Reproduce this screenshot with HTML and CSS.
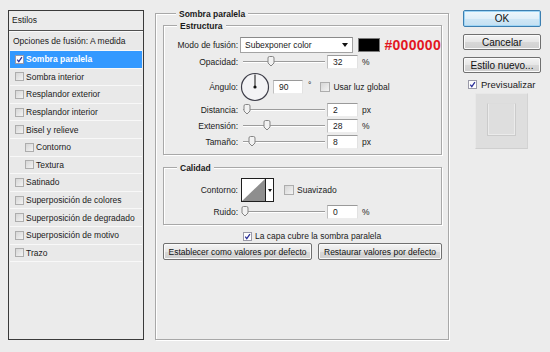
FILE: index.html
```html
<!DOCTYPE html>
<html lang="es">
<head>
    <meta charset="UTF-8">
    <meta name="viewport" content="width=device-width, initial-scale=1.0">
    <title>Estilo de capa</title>
    <link rel="stylesheet" href="styles.css">
</head>
<body>
    <div class="dialog">
        <!-- lista de estilos -->
        <div class="styles-list">
            <div class="list-header">Estilos</div>
            <div class="list-row plain">Opciones de fusión: A medida</div>
            <div class="list-row selected">
                <span class="check checked"><svg width="9" height="9" viewBox="0 0 9 9"><path d="M1.6 4.6 L3.6 7.2 L7.6 1.4" fill="none" stroke="#2a2f9a" stroke-width="1.6"/></svg></span>Sombra paralela
            </div>
            <div class="list-row"><span class="check"></span>Sombra interior</div>
            <div class="list-row"><span class="check"></span>Resplandor exterior</div>
            <div class="list-row"><span class="check"></span>Resplandor interior</div>
            <div class="list-row"><span class="check"></span>Bisel y relieve</div>
            <div class="list-row sub"><span class="check"></span>Contorno</div>
            <div class="list-row sub"><span class="check"></span>Textura</div>
            <div class="list-row"><span class="check"></span>Satinado</div>
            <div class="list-row"><span class="check"></span>Superposición de colores</div>
            <div class="list-row"><span class="check"></span>Superposición de degradado</div>
            <div class="list-row"><span class="check"></span>Superposición de motivo</div>
            <div class="list-row"><span class="check"></span>Trazo</div>
        </div>

        <!-- panel central -->
        <div class="panel">
            <div class="group outer">
                <div class="group-title">Sombra paralela</div>

                <div class="group inner estructura">
                    <div class="group-title">Estructura</div>

                    <div class="field-row row-mode">
                        <span class="field-label">Modo de fusión:</span>
                        <div class="select">Subexponer color<span class="arrow"></span></div>
                        <div class="swatch"></div>
                        <span class="hex">#000000</span>
                    </div>

                    <div class="field-row row-slider first">
                        <span class="field-label">Opacidad:</span>
                        <div class="slider"><span class="thumb" style="left: 30%"></span></div>
                        <div class="num-input">32</div>
                        <span class="unit">%</span>
                    </div>

                    <div class="field-row row-angle">
                        <span class="field-label">Ángulo:</span>
                        <svg class="dial" width="30" height="30" viewBox="0 0 30 30">
                            <circle cx="15" cy="15" r="13.5" fill="#f3f3f5" stroke="#3d3d48" stroke-width="1.2"/>
                            <line x1="15" y1="15" x2="15" y2="2.5" stroke="#222" stroke-width="1.1"/>
                            <circle cx="15" cy="15" r="1.6" fill="#111"/>
                        </svg>
                        <div class="num-input angle">90</div>
                        <span class="degree">°</span>
                        <span class="check box-check"></span>
                        <span class="check-text">Usar luz global</span>
                    </div>

                    <div class="field-row row-slider">
                        <span class="field-label">Distancia:</span>
                        <div class="slider"><span class="thumb" style="left: 2%"></span></div>
                        <div class="num-input">2</div>
                        <span class="unit">px</span>
                    </div>

                    <div class="field-row row-slider">
                        <span class="field-label">Extensión:</span>
                        <div class="slider"><span class="thumb" style="left: 26%"></span></div>
                        <div class="num-input">28</div>
                        <span class="unit">%</span>
                    </div>

                    <div class="field-row row-slider">
                        <span class="field-label">Tamaño:</span>
                        <div class="slider"><span class="thumb" style="left: 8%"></span></div>
                        <div class="num-input">8</div>
                        <span class="unit">px</span>
                    </div>
                </div>

                <div class="group inner calidad">
                    <div class="group-title">Calidad</div>

                    <div class="field-row row-contour">
                        <span class="field-label">Contorno:</span>
                        <div class="contour">
                            <svg width="23" height="22" viewBox="0 0 23 22">
                                <polygon points="0,0 23,0 0,22" fill="#fff"/>
                                <polygon points="23,0 23,22 0,22" fill="#8e8e8e"/>
                            </svg>
                            <span class="contour-arrow"><span class="arrow"></span></span>
                        </div>
                        <span class="check box-check soft"></span>
                        <span class="check-text">Suavizado</span>
                    </div>

                    <div class="field-row row-slider">
                        <span class="field-label">Ruido:</span>
                        <div class="slider"><span class="thumb" style="left: 0%"></span></div>
                        <div class="num-input">0</div>
                        <span class="unit">%</span>
                    </div>
                </div>

                <div class="knock-row">
                    <span class="check checked"><svg width="9" height="9" viewBox="0 0 9 9"><path d="M1.6 4.6 L3.6 7.2 L7.6 1.4" fill="none" stroke="#2a2f9a" stroke-width="1.6"/></svg></span>
                    <span class="check-text">La capa cubre la sombra paralela</span>
                </div>

                <div class="default-buttons">
                    <button class="btn wide">Establecer como valores por defecto</button>
                    <button class="btn">Restaurar valores por defecto</button>
                </div>
            </div>
        </div>

        <!-- botones de la derecha -->
        <div class="actions">
            <button class="btn big primary">OK</button>
            <button class="btn big">Cancelar</button>
            <button class="btn big">Estilo nuevo...</button>
            <div class="preview-toggle">
                <span class="check checked"><svg width="9" height="9" viewBox="0 0 9 9"><path d="M1.6 4.6 L3.6 7.2 L7.6 1.4" fill="none" stroke="#2a2f9a" stroke-width="1.6"/></svg></span>
                <span class="preview-label">Previsualizar</span>
            </div>
            <div class="preview-box">
                <div class="preview-shape"></div>
            </div>
        </div>
    </div>
</body>
</html>
```

FILE: styles.css
```css
* {
    margin: 0;
    padding: 0;
    box-sizing: border-box;
}

body {
    width: 550px;
    height: 352px;
    overflow: hidden;
    background: #ececec;
    color: #1a1a1a;
    font-family: 'Liberation Sans', Arial, sans-serif;
    font-size: 8.5px;
}

.dialog {
    display: flex;
    align-items: flex-start;
    padding: 10px 0 0 8px;
}

/* lista de estilos */
.styles-list {
    width: 136px;
    height: 330px;
    border: 1px solid #3a3a3a;
    background: #ebebeb;
    padding: 0 1px;
    display: flex;
    flex-direction: column;
}

.list-header {
    height: 20px;
    line-height: 18px;
    padding-left: 3px;
    margin: 0 -1px;
    border-bottom: 1px solid #505050;
    box-shadow: 0 1px 0 #fafafa;
}

.list-row {
    height: 17.6px;
    display: flex;
    align-items: center;
    padding-left: 5px;
    border-bottom: 1px solid #f8f8f8;
    background: #e9e9e9;
}

.list-row.plain {
    height: 19px;
    padding-left: 3px;
    margin-top: 1px;
}

.list-row.sub {
    padding-left: 15px;
}

.list-row.selected {
    background: #3399ff;
    color: #fff;
    font-weight: bold;
}

.check {
    width: 9px;
    height: 9px;
    flex: none;
    margin-right: 2px;
    border: 1px solid #adadad;
    background: linear-gradient(135deg, #d6d6d6, #f3f3f3);
    display: flex;
    align-items: center;
    justify-content: center;
}

.check.checked {
    background: #fdfdfd;
    border-color: #9a9aa8;
}

.check svg {
    display: block;
}

/* panel central */
.panel {
    margin-left: 11px;
    margin-top: 3px;
    width: 294px;
}

.group {
    border: 1px solid #a8a8a8;
    box-shadow: inset 1px 1px 0 #fff, 1px 1px 0 #fff;
}

.group-title {
    display: table;
    margin: -6px 0 0 13px;
    padding: 0 3px;
    background: #ececec;
    font-weight: bold;
    line-height: 12px;
}

.outer {
    height: 327px;
    padding: 0 6px 0 7px;
}

.inner {
    padding-bottom: 5px;
}

.estructura {
    margin-top: 5px;
}

.calidad {
    margin-top: 12px;
}

.field-row {
    display: flex;
    align-items: center;
}

.field-label {
    width: 74px;
    flex: none;
    text-align: right;
    margin-right: 2px;
}

.row-mode {
    height: 16px;
    margin-top: 5px;
}

.row-slider {
    height: 14px;
    margin-top: 2px;
}

.row-slider.first {
    margin-top: 2px;
}

.row-angle {
    height: 31px;
    margin-top: 2px;
}

.estructura .row-angle + .row-slider {
    margin-top: 1px;
}

.select {
    width: 117px;
    height: 16px;
    background: #fff;
    border: 1px solid #a3a3a3;
    border-top-color: #8a8a8a;
    padding-left: 4px;
    display: flex;
    align-items: center;
    justify-content: space-between;
    padding-right: 4px;
}

.arrow {
    width: 0;
    height: 0;
    border-left: 3.5px solid transparent;
    border-right: 3.5px solid transparent;
    border-top: 4px solid #111;
}

.swatch {
    width: 23px;
    height: 14px;
    margin-left: 5px;
    background: #000;
    border: 1px solid #7a7a7a;
}

.hex {
    margin-left: 4px;
    color: #e3161f;
    font-weight: bold;
    font-size: 14px;
    letter-spacing: 0.3px;
}

.slider {
    width: 85px;
    height: 14px;
    position: relative;
    margin-left: 0;
    background: linear-gradient(#9c9c9c, #9c9c9c) no-repeat 3px 6px / 82px 1px,
                linear-gradient(#fff, #fff) no-repeat 3px 7px / 82px 1px;
}

.thumb {
    position: absolute;
    top: 1px;
    width: 8px;
    height: 11px;
    margin-left: 1px;
    background: url("data:image/svg+xml;utf8,<svg xmlns='http://www.w3.org/2000/svg' width='8' height='11'><path d='M1 2 Q1 0.5 2.5 0.5 H5.5 Q7 0.5 7 2 V7 L4 10 L1 7 Z' fill='%23f2f2f2' stroke='%23858585'/></svg>") no-repeat;
}

.num-input {
    width: 31px;
    height: 14px;
    margin-left: 2px;
    background: #fff;
    border: 1px solid;
    border-color: #9a9a9a #e2e2e2 #ededed #c0c0c0;
    padding-left: 5px;
    line-height: 12px;
}

.num-input.angle {
    width: 30px;
    margin-left: 3px;
}

.unit {
    margin-left: 4px;
}

.dial {
    display: block;
    flex: none;
}

.degree {
    margin-left: 5px;
    margin-top: -4px;
}

.box-check {
    margin-left: 9px;
    width: 10px;
    height: 10px;
}

.check-text {
    margin-left: 1px;
}

.row-contour {
    height: 24px;
    margin-top: 4px;
}

.row-contour + .row-slider {
    margin-top: 3px;
}

.contour {
    width: 33px;
    height: 24px;
    margin-left: 1px;
    border: 1px solid #1e1e1e;
    display: flex;
    background: #fff;
}

.contour svg {
    display: block;
}

.contour-arrow {
    flex: 1;
    border-left: 1px solid #1e1e1e;
    display: flex;
    align-items: center;
    justify-content: center;
}

.contour-arrow .arrow {
    border-left-width: 2.5px;
    border-right-width: 2.5px;
    border-top-width: 3px;
}

.box-check.soft {
    margin-left: 10px;
}

.knock-row {
    height: 12px;
    margin-top: 5px;
    padding-left: 80px;
    display: flex;
    align-items: center;
}

.default-buttons {
    display: flex;
    gap: 6px;
    margin-top: 1px;
}

/* botones */
.btn {
    height: 17px;
    border: 1px solid #707070;
    border-radius: 2px;
    background: linear-gradient(#f4f4f4, #e6e6e6 50%, #d8d8d8 51%, #cfcfcf);
    box-shadow: inset 0 0 0 1px #fbfbfb;
    font-family: inherit;
    font-size: 8.5px;
    color: #111;
    width: 124px;
}

.btn.wide {
    width: 149px;
}

.actions {
    margin-left: 14px;
    width: 78px;
    display: flex;
    flex-direction: column;
}

.btn.big {
    width: 78px;
    height: 16px;
    font-size: 10px;
    margin-top: 7px;
}

.btn.big.primary {
    margin-top: 0;
    height: 17px;
    border-color: #3c7fb1;
    box-shadow: inset 0 0 0 1px #9fd5f5;
    background: linear-gradient(#eef7fc, #e0eff9 50%, #cfe7f6 51%, #c4e0f2);
}

.preview-toggle {
    height: 12px;
    margin-top: 5px;
    padding-left: 5px;
    display: flex;
    align-items: center;
}

.preview-label {
    font-size: 9.5px;
    margin-left: 2px;
}

.preview-box {
    width: 53px;
    height: 56px;
    margin: 3px 0 0 12px;
    background: #dedede;
    border: 1px solid #e8e8e8;
    border-bottom-color: #cfcfcf;
    border-right-color: #d3d3d3;
    padding: 9px 0 0 11px;
}

.preview-shape {
    width: 29px;
    height: 33px;
    border: 1px solid #cbcbcb;
    border-top-color: #dcdcdc;
    box-shadow: inset 1px 0 0 #ebebeb, inset -1px -1px 0 #ebebeb;
}
```
